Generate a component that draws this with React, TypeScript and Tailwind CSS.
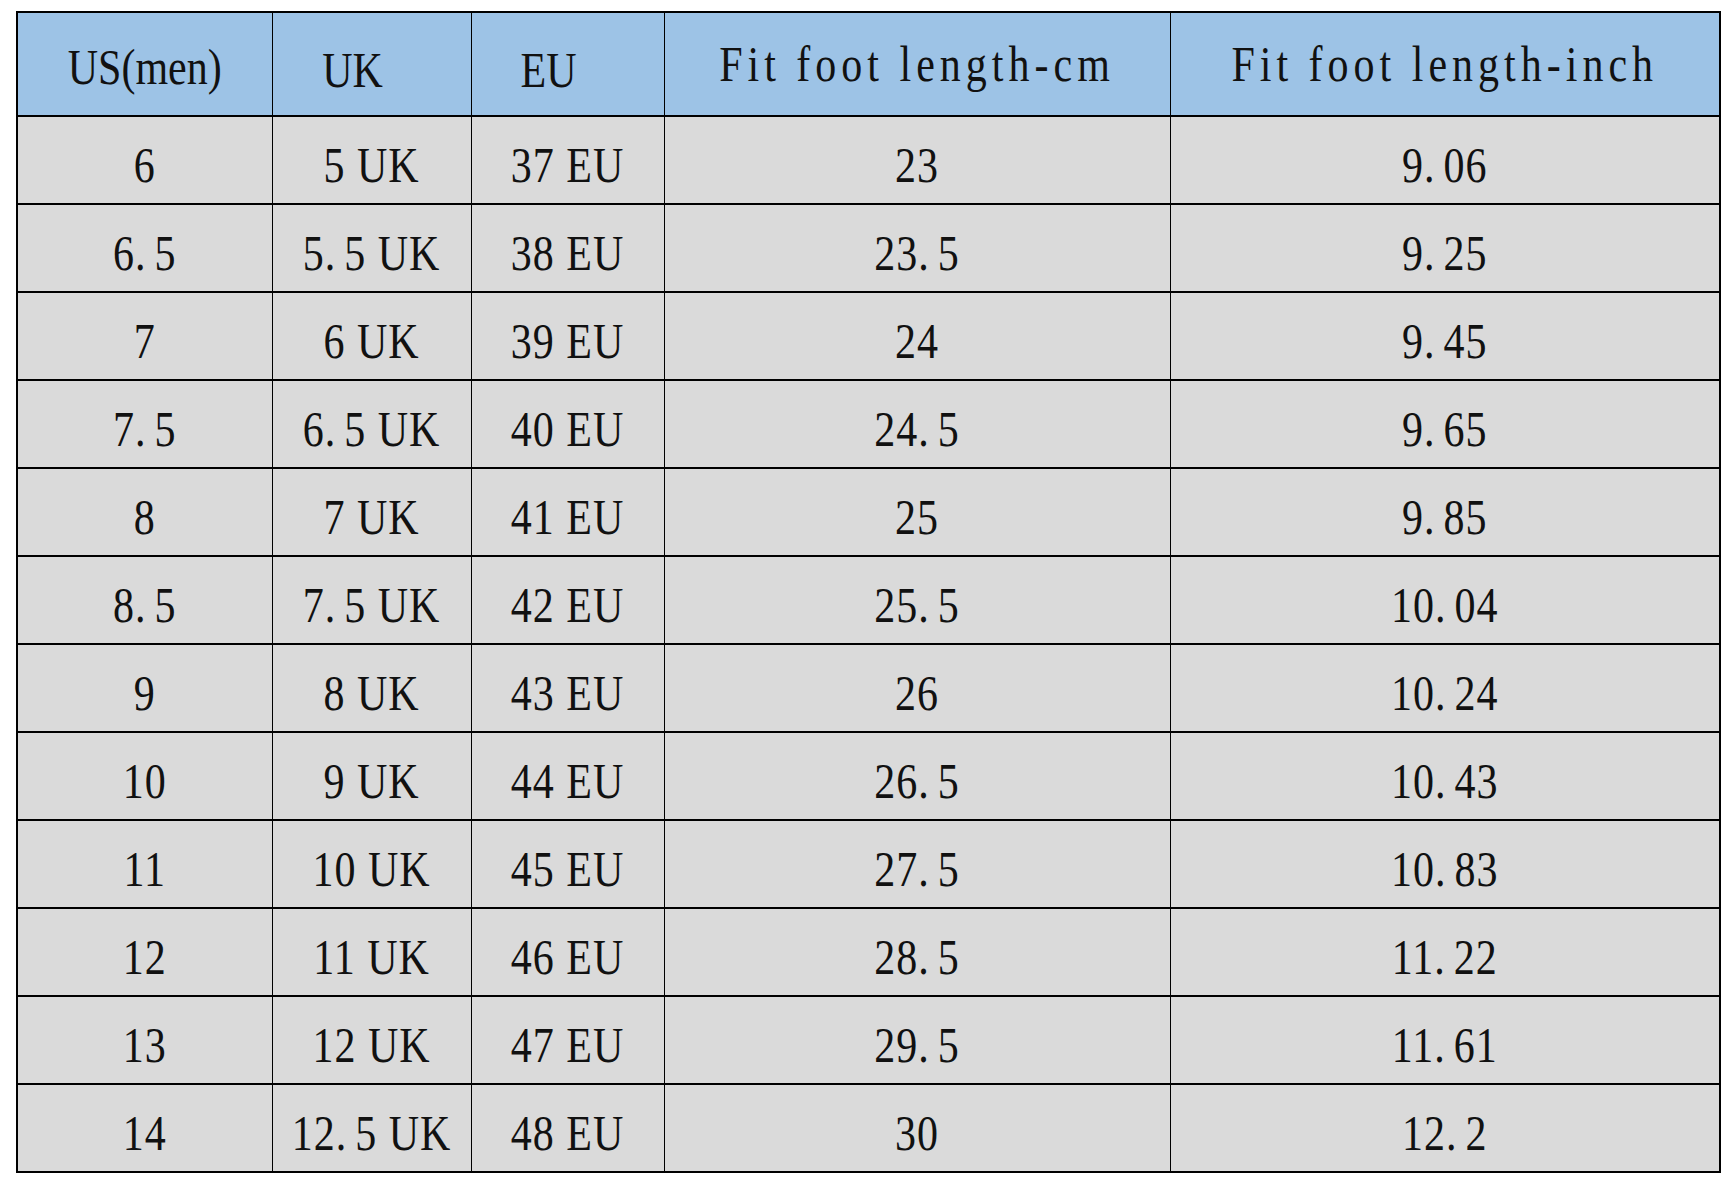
const HEADERS = ["US(men)", "UK", "EU", "Fit foot length-cm", "Fit foot length-inch"];

const ROWS = [
  ["6", "5 UK", "37 EU", "23", "9.06"],
  ["6.5", "5.5 UK", "38 EU", "23.5", "9.25"],
  ["7", "6 UK", "39 EU", "24", "9.45"],
  ["7.5", "6.5 UK", "40 EU", "24.5", "9.65"],
  ["8", "7 UK", "41 EU", "25", "9.85"],
  ["8.5", "7.5 UK", "42 EU", "25.5", "10.04"],
  ["9", "8 UK", "43 EU", "26", "10.24"],
  ["10", "9 UK", "44 EU", "26.5", "10.43"],
  ["11", "10 UK", "45 EU", "27.5", "10.83"],
  ["12", "11 UK", "46 EU", "28.5", "11.22"],
  ["13", "12 UK", "47 EU", "29.5", "11.61"],
  ["14", "12.5 UK", "48 EU", "30", "12.2"],
];

const COL_WIDTHS = ["w-[255px]", "w-[199px]", "w-[193px]", "w-[506px]", "w-[550px]"];

// the period is drawn wide in the original font, so give it some room
function Cell({ text }: { text: string }) {
  const dot = text.indexOf(".");
  if (dot < 0) return <>{text}</>;
  return (
    <>
      {text.slice(0, dot)}
      <span className="mr-[8px]">.</span>
      {text.slice(dot + 1)}
    </>
  );
}

export default function App() {
  return (
    <div className="min-h-screen w-[1734px] h-[1182px] bg-white pl-[16px] pt-[11px] font-['Liberation_Serif',serif] text-[#111]">
      <table className="w-[1704px] border-collapse table-fixed border-2 border-black">
        <colgroup>
          {COL_WIDTHS.map((w, i) => (
            <col key={i} className={w} />
          ))}
        </colgroup>
        <thead>
          <tr className="h-[104px] bg-[#9dc3e6]">
            {HEADERS.map((h, i) => (
              <th
                key={h}
                className={`border-x border-black border-b-2 font-normal text-[42px] text-center ${
                  i === 1 || i === 2 ? "pr-[38px] pt-[12px]" : i === 0 ? "pt-[6px]" : "tracking-[5px]"
                }`}
              >
                <span className="inline-block scale-y-[1.2]">{h}</span>
              </th>
            ))}
          </tr>
        </thead>
        <tbody>
          {ROWS.map((row, r) => (
            <tr key={r} className="h-[88px] bg-[#dadada]">
              {row.map((cell, c) => (
                <td
                  key={c}
                  className="border-x border-black border-b-2 text-center text-[42px] tracking-[1px] pt-[10px]"
                >
                  <span className="inline-block scale-y-[1.2]">
                    <Cell text={cell} />
                  </span>
                </td>
              ))}
            </tr>
          ))}
        </tbody>
      </table>
    </div>
  );
}
